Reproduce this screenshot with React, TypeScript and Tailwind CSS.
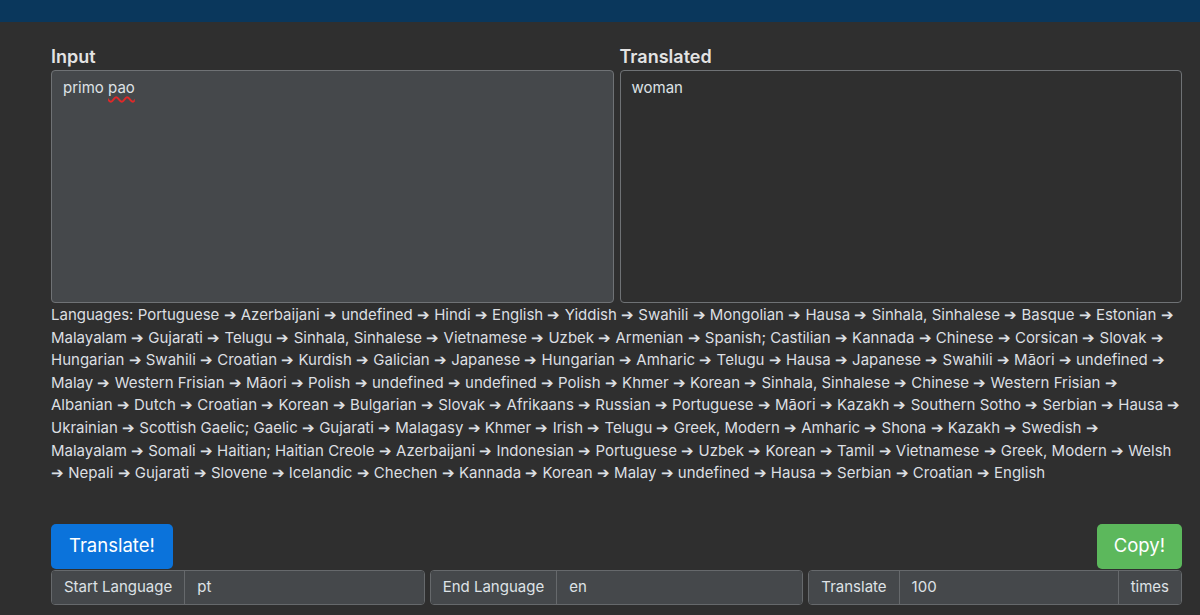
import React from "react";

// chain as it wraps on screen
const LINES = [
  "Languages: Portuguese ➔ Azerbaijani ➔ undefined ➔ Hindi ➔ English ➔ Yiddish ➔ Swahili ➔ Mongolian ➔ Hausa ➔ Sinhala, Sinhalese ➔ Basque ➔ Estonian ➔",
  "Malayalam ➔ Gujarati ➔ Telugu ➔ Sinhala, Sinhalese ➔ Vietnamese ➔ Uzbek ➔ Armenian ➔ Spanish; Castilian ➔ Kannada ➔ Chinese ➔ Corsican ➔ Slovak ➔",
  "Hungarian ➔ Swahili ➔ Croatian ➔ Kurdish ➔ Galician ➔ Japanese ➔ Hungarian ➔ Amharic ➔ Telugu ➔ Hausa ➔ Japanese ➔ Swahili ➔ Māori ➔ undefined ➔",
  "Malay ➔ Western Frisian ➔ Māori ➔ Polish ➔ undefined ➔ undefined ➔ Polish ➔ Khmer ➔ Korean ➔ Sinhala, Sinhalese ➔ Chinese ➔ Western Frisian ➔",
  "Albanian ➔ Dutch ➔ Croatian ➔ Korean ➔ Bulgarian ➔ Slovak ➔ Afrikaans ➔ Russian ➔ Portuguese ➔ Māori ➔ Kazakh ➔ Southern Sotho ➔ Serbian ➔ Hausa ➔",
  "Ukrainian ➔ Scottish Gaelic; Gaelic ➔ Gujarati ➔ Malagasy ➔ Khmer ➔ Irish ➔ Telugu ➔ Greek, Modern ➔ Amharic ➔ Shona ➔ Kazakh ➔ Swedish ➔",
  "Malayalam ➔ Somali ➔ Haitian; Haitian Creole ➔ Azerbaijani ➔ Indonesian ➔ Portuguese ➔ Uzbek ➔ Korean ➔ Tamil ➔ Vietnamese ➔ Greek, Modern ➔ Welsh",
  "➔ Nepali ➔ Gujarati ➔ Slovene ➔ Icelandic ➔ Chechen ➔ Kannada ➔ Korean ➔ Malay ➔ undefined ➔ Hausa ➔ Serbian ➔ Croatian ➔ English",
];

function GroupText({ children, className = "" }: { children: React.ReactNode; className?: string }) {
  return (
    <div className={`flex items-center px-3 bg-[#45484b] text-[#dee2e6] whitespace-nowrap ${className}`}>
      {children}
    </div>
  );
}

function GroupInput({ value }: { value: string }) {
  return (
    <div className="flex-1 flex items-center px-3 bg-[#45484b] text-[#dee2e6] border-l border-[#66696c]">
      {value}
    </div>
  );
}

export default function App() {
  return (
    <div
      className="w-[1200px] h-[615px] overflow-hidden bg-[#2f2f2f] text-[#dee2e6] text-[15px]"
      style={{ fontFamily: "Inter, 'Noto Sans', sans-serif" }}
    >
      {/* top bar */}
      <div className="h-[22px] bg-[#0a375c]" />

      <div className="pl-[51px] pr-[18px] pt-[22px]">
        {/* text areas */}
        <div className="grid grid-cols-2 gap-[6px]">
          <div className="flex flex-col">
            <div className="text-[18px] font-semibold leading-[26px] text-[#e3e3e3]">Input</div>
            <div className="h-[233px] rounded-[4px] border border-[#6f7275] bg-[#45484b] px-[11px] py-[5px] leading-6">
              primo{" "}
              <span className="underline decoration-wavy decoration-[#e02828] underline-offset-[3px] decoration-[1.5px]">
                pao
              </span>
            </div>
          </div>
          <div className="flex flex-col">
            <div className="text-[18px] font-semibold leading-[26px] text-[#e3e3e3]">Translated</div>
            <div className="h-[233px] rounded-[4px] border border-[#6f7275] bg-[#2f2f2f] px-[11px] py-[5px] leading-6">
              woman
            </div>
          </div>
        </div>

        {/* language chain */}
        <p className="mt-[1px] leading-[22.6px] text-[#dcdfe2] whitespace-nowrap">
          {LINES.map((line, i) => (
            <span key={i} className="block">
              {line}
            </span>
          ))}
        </p>

        {/* buttons */}
        <div className="mt-[39px] flex justify-between items-end">
          <button className="h-[45px] px-[18px] rounded-[5px] bg-[#0b73db] text-white text-[18.5px]">
            Translate!
          </button>
          <button className="h-[45px] px-[17px] rounded-[5px] bg-[#5cb85c] text-white text-[18.5px]">
            Copy!
          </button>
        </div>

        {/* input groups */}
        <div className="mt-[1px] grid grid-cols-3 gap-[5px] h-[35px]">
          <div className="flex rounded-[4px] border border-[#66696c] overflow-hidden">
            <GroupText>Start Language</GroupText>
            <GroupInput value="pt" />
          </div>
          <div className="flex rounded-[4px] border border-[#66696c] overflow-hidden">
            <GroupText>End Language</GroupText>
            <GroupInput value="en" />
          </div>
          <div className="flex rounded-[4px] border border-[#66696c] overflow-hidden">
            <GroupText>Translate</GroupText>
            <GroupInput value="100" />
            <GroupText className="border-l border-[#66696c]">times</GroupText>
          </div>
        </div>
      </div>
    </div>
  );
}
